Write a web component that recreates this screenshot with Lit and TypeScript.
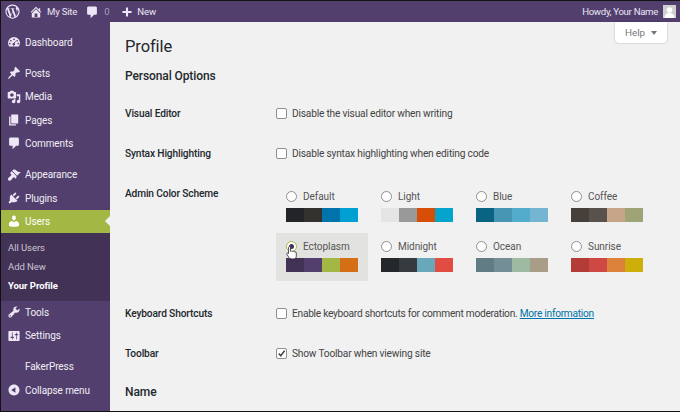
import { LitElement, html, css, svg } from "lit";
import { customElement } from "lit/decorators.js";

const ICONS: Record<string, any> = {
  home: svg`<path d="M16 8.5l1.53 1.53-1.06 1.06L10 4.62l-6.47 6.47-1.06-1.06L10 2.5l4 4v-2h2v4zm-6-2.46l6 5.99V18H4v-5.97zM12 17v-5H8v5h4z"/>`,
  comment: svg`<path d="M5 2h10c1.1 0 2 .9 2 2v8c0 1.1-.9 2-2 2h-2l-5 5v-5H5c-1.1 0-2-.9-2-2V4c0-1.1.9-2 2-2z"/>`,
  plus: svg`<path d="M17 7v3h-5v5H9v-5H4V7h5V2h3v5h5z" transform="translate(-.5 1.5)"/>`,
  dashboard: svg`<path fill-rule="evenodd" d="M10 3a8.5 8.5 0 0 0-8.5 8.5c0 1.9.6 3.6 1.7 5h13.6a8.4 8.4 0 0 0 1.7-5A8.5 8.5 0 0 0 10 3zM10 5a1.2 1.2 0 1 1 0 2.4A1.2 1.2 0 0 1 10 5zM5.5 7a1.2 1.2 0 1 1 0 2.4 1.2 1.2 0 0 1 0-2.4zM14.5 7a1.2 1.2 0 1 1 0 2.4 1.2 1.2 0 0 1 0-2.4zM4 11a1.2 1.2 0 1 1 0 2.4A1.2 1.2 0 0 1 4 11zM16 11a1.2 1.2 0 1 1 0 2.4 1.2 1.2 0 0 1 0-2.4zM13 8l-2 4.2a1.8 1.8 0 1 1-1.5-.7z"/>`,
  pin: svg`<path d="M10.44 3.02l1.82-1.82 6.36 6.35-1.83 1.82c-1.05-.68-2.48-.57-3.41.36l-.75.75c-.92.93-1.04 2.35-.35 3.41l-1.83 1.82-2.41-2.41-2.8 2.79c-.42.42-3.38 2.71-3.8 2.29s1.86-3.39 2.28-3.81l2.79-2.79L4.1 9.36l1.83-1.82c1.05.69 2.48.57 3.4-.36l.75-.75c.93-.92 1.05-2.35.36-3.41z"/>`,
  media: svg`<path d="M13 11V4c0-.55-.45-1-1-1h-1.67L9 1H5L3.67 3H2c-.55 0-1 .45-1 1v7c0 .55.45 1 1 1h10c.55 0 1-.45 1-1zM7 4.5c1.38 0 2.5 1.12 2.5 2.5S8.38 9.5 7 9.5 4.5 8.38 4.5 7 5.62 4.5 7 4.5zM14 6h5v10.5c0 1.38-1.12 2.5-2.5 2.5S14 17.88 14 16.5s1.12-2.5 2.5-2.5c.17 0 .34.02.5.05V9h-3V6zm-4 8.05V13h2v3.5c0 1.38-1.12 2.5-2.5 2.5S7 17.88 7 16.5 8.12 14 9.5 14c.17 0 .34.02.5.05z"/>`,
  pages: svg`<path d="M6 15V2h10v13H6zm-1 1h8v2H3V5h2v11z"/>`,
  brush: svg`<path d="M14.48 11.06L7.41 3.99l1.5-1.5c.5-.56 2.3-.47 3.51.32 1.21.8 1.43 1.28 2.91 2.1 1.18.64 2.45 1.26 4.45.85zm-.71.71L6.7 4.7 4.93 6.47c-.39.39-.39 1.02 0 1.41l1.06 1.06c.39.39.39 1.03 0 1.42-.6.6-1.4 1.57-2.41 2.42-.37.31-.74.62-1.09.96-1.36 1.33-1.6 2.74-.53 3.81 1.08 1.07 2.48.83 3.81-.53.34-.35.65-.72.96-1.09.85-1.01 1.82-1.81 2.42-2.41.39-.39 1.03-.39 1.42 0l1.06 1.06c.39.39 1.02.39 1.41 0z"/>`,
  plugin: svg`<path d="M13.11 4.36L9.87 7.6 8 5.73l3.24-3.24c.35-.34 1.05-.2 1.56.32.52.51.66 1.21.31 1.55zm-8 1.77l.91-1.12 9.01 9.01-1.19.84c-.71.71-2.63 1.16-3.82 1.16H6.14L4.9 17.26c-.59.59-1.54.59-2.12 0-.59-.58-.59-1.53 0-2.12l1.24-1.24v-3.88c0-1.13.4-3.19 1.09-3.89zm7.26 3.97l3.24-3.24c.34-.35 1.04-.21 1.55.31.52.51.66 1.21.31 1.55l-3.24 3.25z"/>`,
  user: svg`<path d="M10 9.25c-2.27 0-2.73-3.44-2.73-3.44C7 4.02 7.82 2 9.97 2c2.16 0 2.98 2.02 2.71 3.81 0 0-.41 3.44-2.68 3.44zm0 2.57L12.72 10c2.39 0 4.52 2.33 4.52 4.53v2.49s-3.65 1.13-7.24 1.13c-3.65 0-7.24-1.13-7.24-1.13v-2.49c0-2.25 1.94-4.48 4.47-4.48z"/>`,
  tools: svg`<path d="M16.68 9.77c-1.34 1.34-3.3 1.67-4.95.99l-5.41 6.52c-.99.99-2.59.99-3.58 0s-.99-2.59 0-3.57l6.52-5.42c-.68-1.65-.35-3.61.99-4.95 1.28-1.28 3.12-1.62 4.72-1.06l-2.89 2.89 2.82 2.82 2.86-2.87c.53 1.58.18 3.39-1.08 4.65zM3.81 16.21c.4.39 1.04.39 1.43 0 .4-.4.4-1.04 0-1.43-.39-.4-1.03-.4-1.43 0-.39.39-.39 1.03 0 1.43z"/>`,
  settings: svg`<path d="M18 16V4c0-.55-.45-1-1-1H3c-.55 0-1 .45-1 1v12c0 .55.45 1 1 1h14c.55 0 1-.45 1-1zM8 11h1c.55 0 1 .45 1 1s-.45 1-1 1H8v1.5c0 .28-.22.5-.5.5s-.5-.22-.5-.5V13H6c-.55 0-1-.45-1-1s.45-1 1-1h1V5.500c0-.28.22-.5.5-.5s.5.22.5.5V11zm5-2h-1c-.55 0-1-.45-1-1s.45-1 1-1h1V5.500c0-.28.22-.5.5-.5s.5.22.5.5V7h1c.55 0 1 .45 1 1s-.45 1-1 1h-1v5.500c0 .28-.22.5-.5.5s-.5-.22-.5-.5V9z"/>`,
  collapse: svg`<path d="M10 2.16c4.33 0 7.84 3.51 7.84 7.84s-3.510 7.84-7.84 7.84S2.160 14.330 2.160 10 5.710 2.160 10 2.160zm2 11.840V6l-6 4z"/>`,
};
const icon = (n: string) => html`<svg class="ic" viewBox="0 0 20 20" fill="currentColor">${ICONS[n]}</svg>`;

const MENU: (string | string[])[] = [
  ["dashboard", "Dashboard"],
  "sep",
  ["pin", "Posts"],
  ["media", "Media"],
  ["pages", "Pages"],
  ["comment", "Comments"],
  "sep",
  ["brush", "Appearance"],
  ["plugin", "Plugins"],
  ["user", "Users", "current"],
];
const MENU2: (string | string[])[] = [
  ["tools", "Tools"],
  ["settings", "Settings"],
  "sep",
  ["", "FakerPress"],
  ["collapse", "Collapse menu"],
];

const SCHEMES: [string, string[]][] = [
  ["Default", ["#222427", "#33322f", "#0073aa", "#00a0d2"]],
  ["Light", ["#e5e5e5", "#999999", "#d64e07", "#04a4cc"]],
  ["Blue", ["#096484", "#4796b3", "#52accc", "#74b6d2"]],
  ["Coffee", ["#46403c", "#59524c", "#c7a589", "#9ea476"]],
  ["Ectoplasm", ["#413256", "#523f6d", "#a3b745", "#d46f15"]],
  ["Midnight", ["#25282b", "#363b3f", "#69a8bb", "#e14d43"]],
  ["Ocean", ["#627c83", "#738e96", "#9ebaa0", "#aa9d88"]],
  ["Sunrise", ["#b43c38", "#cf4944", "#dd823b", "#ccaf0b"]],
];

@customElement("app-root")
export class AppRoot extends LitElement {
  static styles = css`
    :host { display: block; width: 680px; height: 412px; overflow: hidden; font-family: Roboto, "Open Sans", sans-serif; font-size: 10.2px; color: #444; background: #f1f1f1; }
    * { box-sizing: border-box; }
    .frame { height: 412px; border: solid #111; border-width: 1px 0 1px 1px; display: flex; flex-direction: column; position: relative; }
    .bar { height: 21px; flex: none; background: #523f6d; color: #ece6f6; display: flex; align-items: center; font-size: 9.6px; letter-spacing: -.2px; }
    .bar .ic { width: 14px; height: 14px; }
    .wp { margin-left: 4px; width: 15px; height: 15px; }
    .bi { display: flex; align-items: center; gap: 4px; }
    .home { margin-left: 9px; }
    .cmt { margin-left: 8px; gap: 5px; }
    .cmt span { color: #a89cbb; }
    .new { margin-left: 11px; gap: 3px; }
    .howdy { margin-left: auto; display: flex; align-items: center; gap: 5px; padding-right: 4px; letter-spacing: -.3px; }
    .avatar { width: 13px; height: 13px; background: #cfcfcf; overflow: hidden; display: block; }
    .body { flex: 1; display: flex; min-height: 0; }
    .side { width: 109px; flex: none; background: #523f6d; color: #f0eef4; padding-top: 8.400px; }
    .item { height: 23.33px; display: flex; align-items: center; font-size: 10px; letter-spacing: -.1px; position: relative; }
    .item .ico { width: 24px; display: flex; justify-content: center; padding-left: 1px; flex: none; color: #ece6f6; }
    .item .ic { width: 14px; height: 14px; }
    .sep { height: 8px; }
    .current { background: #a3b745; color: #fff; }
    .current .ico { color: #fff; }
    .current::after { content: ""; position: absolute; right: 0; top: 6.500px; border: 5.5px solid transparent; border-right-color: #f1f1f1; border-left-width: 0; }
    .sub { background: #413256; height: 67.5px; padding-top: 5px; color: #cbc5d3; font-size: 9.5px; letter-spacing: -.05px; }
    .sub div { height: 19px; padding-left: 7px; display: flex; align-items: center; }
    .sub .on { color: #fff; font-weight: 700; }
    .main { flex: 1; padding: 0 0 0 15px; position: relative; min-width: 0; color: #444; }
    .help { position: absolute; right: 13px; top: 0; width: 52px; height: 21px; background: #fff; border-radius: 0 0 4px 4px; box-shadow: 0 0 2px rgba(0,0,0,.3); display: flex; align-items: center; justify-content: center; gap: 6px; color: #72777c; font-size: 9.8px; }
    .help i { border: 3px solid transparent; border-top: 4px solid #72777c; border-bottom: 0; }
    h1 { margin: 13px 0 0; font-size: 16.5px; font-weight: 400; letter-spacing: -.1px; color: #23282d; line-height: 24px; }
    h2 { margin: 9px 0 0; font-size: 12px; font-weight: 500; letter-spacing: -.1px; color: #23282d; line-height: 16px; }
    .row { display: flex; align-items: center; height: 40px; }
    .row.first { margin-top: 9px; }
    .th { width: 151px; flex: none; font-weight: 500; color: #23282d; font-size: 10.2px; letter-spacing: -.15px; }
    .check { display: flex; align-items: center; gap: 5px; color: #444; font-size: 10.2px; letter-spacing: -.2px; }
    .tight { letter-spacing: -.27px; }
    .cb { width: 11px; height: 11px; border: 1px solid #8f8f8f; border-radius: 2px; background: #fff; display: flex; }
    .cb svg { width: 9px; height: 9px; }
    a { color: #0073aa; text-decoration: underline; }
    .schemes { height: 120px; display: flex; }
    .schemes .th { padding-top: 13px; line-height: 16px; }
    .grid { display: grid; grid-template-columns: repeat(4, 92px); column-gap: 3px; grid-auto-rows: 50px; padding-top: 10px; }
    .cell { padding: 7px 10px 0; }
    .cell.sel { background: #e2e3e0; height: 48px; }
    .lab { display: flex; align-items: center; gap: 6px; height: 13px; font-size: 10px; letter-spacing: -.05px; color: #555; }
    .radio { width: 11px; height: 11px; border-radius: 50%; border: 1px solid #8f8f8f; background: #fff; flex: none; display: flex; align-items: center; justify-content: center; }
    .radio i { width: 5px; height: 5px; border-radius: 50%; background: #413256; }
    .cell.sel .radio { border-color: #a3b745; }
    .sw { display: flex; margin-top: 5px; height: 14px; width: 72px; }
    .sw span { flex: 1; }
    .hand { position: absolute; width: 12px; height: 15px; left: 285px; top: 244px; }
    .name { margin: 11px 0 0; font-size: 12px; font-weight: 500; letter-spacing: -.1px; color: #23282d; line-height: 16px; }
  `;

  private renderItem(m: any) {
    if (m === "sep") return html`<div class="sep"></div>`;
    return html`<div class="item ${m[2] ?? ""}"><span class="ico">${m[0] ? icon(m[0]) : ""}</span>${m[1]}</div>`;
  }

  render() {
    return html`<div class="frame">
      <div class="bar">
        <svg class="wp" viewBox="0 0 20 20" fill="#ece6f6"><path fill-rule="evenodd" d="M10 .5a9.500 9.500 0 1 0 0 19 9.500 9.500 0 0 0 0-19zM2 10c0-1.200.25-2.300.7-3.300l3.800 10.500A8 8 0 0 1 2 10zm8 8c-.8 0-1.500-.1-2.300-.3l2.400-7 2.500 6.800A8 8 0 0 1 10 18zm1.100-11.700c.5 0 .9-.1.900-.1.400 0 .4-.7 0-.7 0 0-1.300.1-2.100.1-.8 0-2-.1-2-.1-.5 0-.5.700 0 .7 0 0 .4.100.8.100l1.200 3.300-1.700 5.100L5.300 6.300c.5 0 .9-.1.900-.1.400 0 .4-.7 0-.7 0 0-1.300.1-2.100.1h-.5A8 8 0 0 1 15.700 4.400h-.1c-.8 0-1.300.7-1.300 1.400 0 .7.400 1.200.8 1.900.3.500.7 1.200.7 2.200 0 .7-.3 1.500-.6 2.600l-.8 2.700zm2.900 10.500l2.400-7c.4-1.100.6-2 .6-2.800 0-.3 0-.6-.1-.8A8 8 0 0 1 14 16.900z"/></svg>
        <span class="bi home">${icon("home")}My Site</span>
        <span class="bi cmt">${icon("comment")}<span>0</span></span>
        <span class="bi new">${icon("plus")}New</span>
        <span class="howdy">Howdy, Your Name
          <svg class="avatar" viewBox="0 0 13 13"><rect width="13" height="13" fill="#cfcfcf"/><circle cx="6.500" cy="5" r="2.800" fill="#fff"/><path d="M1.500 13c0-3.500 2.200-5 5-5s5 1.500 5 5z" fill="#fff"/></svg>
        </span>
      </div>
      <div class="body">
        <div class="side">
          ${MENU.map((m) => this.renderItem(m))}
          <div class="sub">
            <div>All Users</div><div>Add New</div><div class="on">Your Profile</div>
          </div>
          ${MENU2.map((m) => this.renderItem(m))}
        </div>
        <div class="main">
          <div class="help">Help <i></i></div>
          <h1>Profile</h1>
          <h2>Personal Options</h2>
          <div class="row first"><div class="th">Visual Editor</div><label class="check"><span class="cb"></span>Disable the visual editor when writing</label></div>
          <div class="row"><div class="th">Syntax Highlighting</div><label class="check"><span class="cb"></span>Disable syntax highlighting when editing code</label></div>
          <div class="schemes"><div class="th">Admin Color Scheme</div>
            <div class="grid">
              ${SCHEMES.map(([n, cs]) => html`<div class="cell ${n === "Ectoplasm" ? "sel" : ""}">
                <div class="lab"><span class="radio">${n === "Ectoplasm" ? html`<i></i>` : ""}</span>${n}</div>
                <div class="sw">${cs.map((c) => html`<span style="background:${c}"></span>`)}</div>
              </div>`)}
            </div>
          </div>
          <div class="row"><div class="th">Keyboard Shortcuts</div><label class="check"><span class="cb"></span><span class="tight">Enable keyboard shortcuts for comment moderation. <a>More information</a></span></label></div>
          <div class="row"><div class="th">Toolbar</div><label class="check"><span class="cb"><svg viewBox="0 0 10 10"><path d="M2 5l2.200 2.500L8.500 1.800" fill="none" stroke="#444" stroke-width="1.800"/></svg></span>Show Toolbar when viewing site</label></div>
          <div class="name">Name</div>
        </div>
      </div>
      <svg class="hand" viewBox="0 0 14 17"><path d="M4 1.500c.8 0 1.300.5 1.300 1.300V7l1-.2c.5-.1 1 .1 1.200.4l1-.1c.5 0 .9.200 1.100.5l.9-.1c.9 0 1.500.7 1.500 1.600V13c0 1.500-1 3-2.500 3H6c-1 0-1.700-.6-2.300-1.400L1.200 11c-.5-.7-.3-1.400.2-1.800.5-.3 1.200-.2 1.600.3l.0.2V2.800C3 2 3.300 1.500 4 1.500z" fill="#fff" stroke="#222" stroke-width=".9"/></svg>
    </div>`;
  }
}
